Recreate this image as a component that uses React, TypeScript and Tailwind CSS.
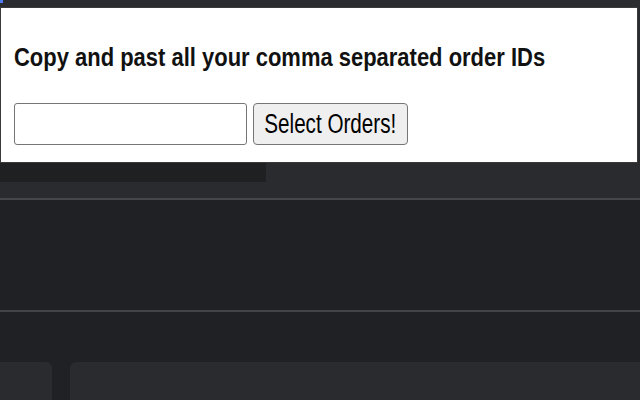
export default function App() {
  return (
    <div className="relative w-[640px] h-[400px] overflow-hidden bg-[#202124]" style={{ fontFamily: '"Liberation Sans", Arial, sans-serif' }}>
      {/* page underneath */}
      <div className="h-[198px] bg-[#2a2b2e] flex flex-col">
        <div className="h-[7px] bg-[#2b2c30] flex">
          <div className="w-[3px] h-[3px] bg-[#4f7cf0]" />
        </div>
        <div className="h-[155px]" />
        <div className="w-[266px] h-[20px] bg-[#1f2022]" />
      </div>
      <div className="h-[2px] bg-[#46474b]" />
      <div className="h-[110px]" />
      <div className="h-[2px] bg-[#424347]" />
      <div className="h-[50px]" />
      <div className="flex gap-[18px] h-[40px]">
        <div className="w-[52px] bg-[#2a2b2f] rounded-tr-md" />
        <div className="flex-1 bg-[#2a2b2f] rounded-tl-md" />
      </div>

      {/* extension popup */}
      <div className="absolute left-0 top-[7px] w-[638px] h-[156px] bg-white border border-[#3a3a3a] pl-[13px] pt-[34px] flex flex-col">
        <h1 className="text-[26px] leading-[30px] font-bold text-[#111] whitespace-nowrap origin-left scale-x-[0.845]">
          Copy and past all your comma separated order IDs
        </h1>
        <div className="mt-[31px] flex gap-[6px]">
          <input type="text" className="w-[233px] h-[42px] rounded-[3px] border border-[#767676] bg-white outline-none" />
          <button type="button" className="w-[155px] h-[42px] rounded-[4px] border border-[#767676] bg-[#efefef] text-black flex items-center justify-center whitespace-nowrap">
            <span className="text-[27px] leading-none scale-x-[0.765]">Select Orders!</span>
          </button>
        </div>
      </div>
    </div>
  )
}
